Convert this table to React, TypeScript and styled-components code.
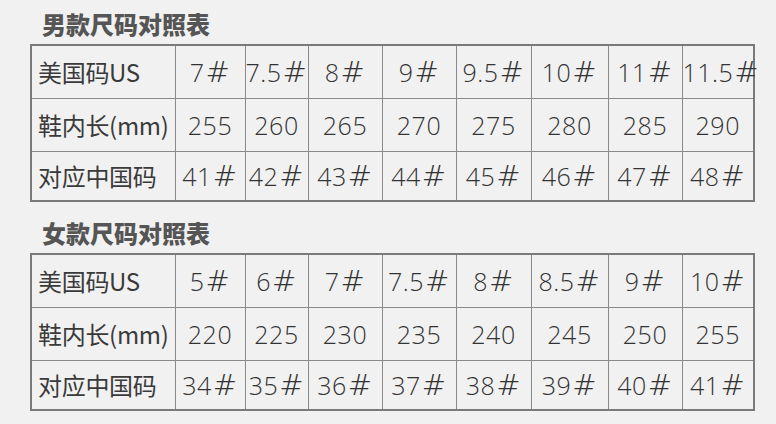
import React from 'react';
import styled, { createGlobalStyle } from 'styled-components';

const GlobalStyle = createGlobalStyle`
  html, body {
    margin: 0;
    padding: 0;
    background: #f1f1f1;
  }
  body {
    font-family: "Noto Sans CJK SC", "Noto Sans", sans-serif;
  }
`;

const Page = styled.div`
  width: 776px;
  height: 424px;
  box-sizing: border-box;
  padding: 0 23px 0 30px;
  background: #f1f1f1;
  overflow: hidden;
`;

const Section = styled.section<{ $first?: boolean }>`
  margin-top: ${({ $first }) => ($first ? '0' : '7px')};
`;

const Title = styled.h2`
  margin: 0;
  padding: 9px 0 0 12px;
  height: 35px;
  line-height: 30px;
  font-family: "Noto Sans CJK SC", serif;
  font-size: 24px;
  font-weight: 900;
  color: #555;
  letter-spacing: 0;
`;

const Table = styled.table`
  width: 723px;
  border-collapse: collapse;
  table-layout: fixed;
  border: 2px solid #7a7a7a;
`;

const Row = styled.tr<{ $h: number }>`
  height: ${({ $h }) => $h}px;
`;

const Label = styled.td`
  border: 1px solid #8a8a8a;
  padding: 0 0 0 6px;
  font-size: 24px;
  color: #3a3a3a;
  white-space: nowrap;
  letter-spacing: -0.3px;
`;

const Cell = styled.td`
  border: 1px solid #8a8a8a;
  padding: 0;
  text-align: center;
  font-family: "Open Sans", "Noto Sans", sans-serif;
  font-size: 25px;
  font-weight: 300;
  color: #333;
  white-space: nowrap;
  letter-spacing: 0.5px;
`;

const Hash = styled.span`
  font-family: "DejaVu Sans", sans-serif;
  font-weight: 200;
  font-size: 29px;
  line-height: 1;
  margin-left: 1px;
`;

const widths = [144, 70, 63, 74, 74, 75, 77, 74, 72];

type Chart = { title: string; us: string[]; mm: number[]; cn: number[] };

const charts: Chart[] = [
  {
    title: '男款尺码对照表',
    us: ['7', '7.5', '8', '9', '9.5', '10', '11', '11.5'],
    mm: [255, 260, 265, 270, 275, 280, 285, 290],
    cn: [41, 42, 43, 44, 45, 46, 47, 48],
  },
  {
    title: '女款尺码对照表',
    us: ['5', '6', '7', '7.5', '8', '8.5', '9', '10'],
    mm: [220, 225, 230, 235, 240, 245, 250, 255],
    cn: [34, 35, 36, 37, 38, 39, 40, 41],
  },
];

const SizeTable: React.FC<{ chart: Chart; first?: boolean }> = ({ chart, first }) => (
  <Section $first={first}>
    <Title>{chart.title}</Title>
    <Table>
      <colgroup>
        {widths.map((w, i) => (
          <col key={i} style={{ width: w }} />
        ))}
      </colgroup>
      <tbody>
        <Row $h={53}>
          <Label>美国码US</Label>
          {chart.us.map((v) => (
            <Cell key={v}>
              {v}
              <Hash>#</Hash>
            </Cell>
          ))}
        </Row>
        <Row $h={53}>
          <Label>鞋内长(mm)</Label>
          {chart.mm.map((v) => (
            <Cell key={v}>{v}</Cell>
          ))}
        </Row>
        <Row $h={50}>
          <Label>对应中国码</Label>
          {chart.cn.map((v) => (
            <Cell key={v}>
              {v}
              <Hash>#</Hash>
            </Cell>
          ))}
        </Row>
      </tbody>
    </Table>
  </Section>
);

export default function App() {
  return (
    <>
      <GlobalStyle />
      <Page>
        {charts.map((c, i) => (
          <SizeTable key={c.title} chart={c} first={i === 0} />
        ))}
      </Page>
    </>
  );
}
